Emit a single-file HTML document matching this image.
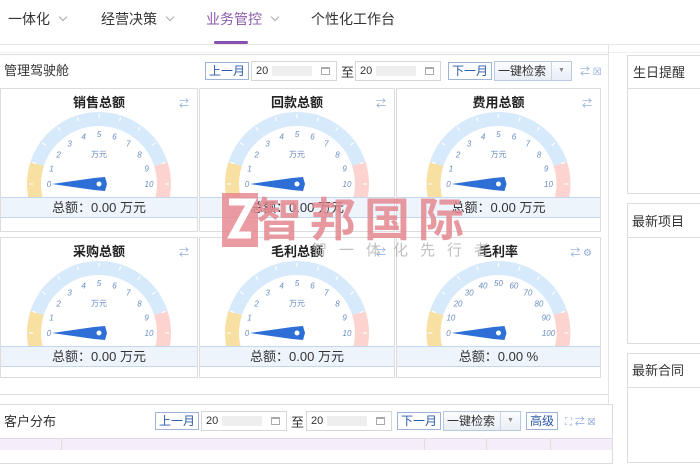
<!DOCTYPE html>
<html><head><meta charset="utf-8">
<style>
*{box-sizing:border-box;margin:0;padding:0}
body{width:700px;height:450px;overflow:hidden;background:#fff;font-family:"Liberation Sans","Noto Sans CJK SC",sans-serif;color:#333;position:relative}
.a{position:absolute}
.nav{font-size:14px;color:#333;top:9px}
.chev{display:inline-block;width:6px;height:6px;border-right:1px solid #aaa;border-bottom:1px solid #aaa;transform:rotate(45deg);margin-left:10px;position:relative;top:-4px}
.box{border:1px solid #dcdcdc;background:#fff}
.btn{position:absolute;height:18px;border:1px solid #9db4d8;font-size:12px;line-height:16px;color:#2a5aa8;padding:0 3px;background:#fff}
.date{position:absolute;height:20px;border:1px solid #d6d6d6;font-size:11px;line-height:18px;padding-left:4px;color:#333;background:#fff}
.date i{position:absolute;left:20px;top:4px;width:40px;height:10px;background:#eee}
.date b{position:absolute;right:6px;top:5px;width:9px;height:8px;border:1px solid #aaa;border-top-width:2px}
.sel{position:absolute;height:20px;border:1px solid #b9c9e2;background:linear-gradient(#fbfcfe,#e9eef6);font-size:12px;line-height:18px;padding-left:3px;color:#333}
.sel span{position:absolute;right:0;top:0;width:20px;height:18px;border-left:1px solid #c9d4e6;font-size:7px;text-align:center;color:#888}
.cell{position:absolute;border:1px solid #dcdcdc;background:#fff;overflow:hidden}
.cell h4{position:absolute;top:3px;left:0;right:0;text-align:center;font-size:13px;font-weight:bold;color:#222}
.foot{position:absolute;left:0;right:0;height:21px;background:#eef4fc;border-top:1px solid #c5d7ee;border-bottom:1px solid #c5d7ee;text-align:center;font-size:13px;line-height:19px;color:#333}
.ref{position:absolute;right:8px;top:6px;color:#8eabd8;font-size:10px}
</style></head><body>
<div class="a nav" style="left:8px">一体化<span class="chev"></span></div>
<div class="a nav" style="left:101px">经营决策<span class="chev"></span></div>
<div class="a nav" style="left:206px;color:#8a5aa8">业务管控<span class="chev"></span></div>
<div class="a nav" style="left:311px">个性化工作台</div>
<div class="a" style="left:214px;top:41px;width:34px;height:3px;background:#8a4fb0;border-radius:2px"></div>
<div class="a" style="left:0;top:44px;width:700px;height:1px;background:#e6e6e6"></div>
<div class="a" style="left:0;top:52px;width:700px;height:1px;background:#eee"></div>

<div class="a box" style="left:-2px;top:54px;width:611px;height:341px"></div>
<div class="a" style="left:4px;top:60px;font-size:13px">管理驾驶舱</div>
<div class="btn" style="left:205px;top:62px">上一月</div>
<div class="date" style="left:251px;top:61px;width:86px">20<i></i><b></b></div>
<div class="a" style="left:341px;top:62px;font-size:13px">至</div>
<div class="date" style="left:355px;top:61px;width:86px">20<i></i><b></b></div>
<div class="btn" style="left:448px;top:62px">下一月</div>
<div class="sel" style="left:494px;top:61px;width:78px">一键检索<span>▼</span></div>
<div class="a" style="left:580px;top:63px;font-size:10px;color:#8eabd8">⇄ ☒</div>

<div id="g"></div>

<div class="a" style="left:608px;top:44px;width:1px;height:406px;background:#e3e3e3"></div>
<div class="a box" style="left:627px;top:55px;width:80px;height:139px"></div>
<div class="a" style="left:627px;top:88px;width:80px;height:1px;background:#ddd"></div>
<div class="a" style="left:633px;top:62px;font-size:13px">生日提醒</div>
<div class="a box" style="left:627px;top:203px;width:80px;height:141px"></div>
<div class="a" style="left:627px;top:237px;width:80px;height:1px;background:#ddd"></div>
<div class="a" style="left:632px;top:211px;font-size:13px">最新项目</div>
<div class="a box" style="left:627px;top:353px;width:80px;height:110px"></div>
<div class="a" style="left:627px;top:387px;width:80px;height:1px;background:#ddd"></div>
<div class="a" style="left:632px;top:360px;font-size:13px">最新合同</div>

<div class="a box" style="left:-2px;top:404px;width:615px;height:60px"></div>
<div class="a" style="left:0;top:438px;width:612px;height:12px;background:#f5eef8;border-top:1px solid #e0d8e6"></div>
<div class="a" style="left:61px;top:438px;width:1px;height:12px;background:#ddd"></div>
<div class="a" style="left:424px;top:438px;width:1px;height:12px;background:#ddd"></div>
<div class="a" style="left:486px;top:438px;width:1px;height:12px;background:#ddd"></div>
<div class="a" style="left:550px;top:438px;width:1px;height:12px;background:#ddd"></div>
<div class="a" style="left:4px;top:411px;font-size:13px">客户分布</div>
<div class="btn" style="left:155px;top:412px">上一月</div>
<div class="date" style="left:201px;top:411px;width:86px">20<i></i><b></b></div>
<div class="a" style="left:291px;top:412px;font-size:13px">至</div>
<div class="date" style="left:306px;top:411px;width:86px">20<i></i><b></b></div>
<div class="btn" style="left:397px;top:412px">下一月</div>
<div class="sel" style="left:443px;top:411px;width:78px">一键检索<span>▼</span></div>
<div class="btn" style="left:526px;top:412px">高级</div>
<div class="a" style="left:565px;top:413px;font-size:10px;color:#8eabd8">⛶ ⇄ ☒</div>

<script>
function gauge(x,y,w,h,title,max,unit,foot,gear){
 var cx=w/2-1, cy=95, ro=72, ri=58, rm=65;
 function P(r,a){a=a*Math.PI/180;return [cx+r*Math.cos(a),cy-r*Math.sin(a)];}
 function arc(a1,a2,col){var p=P(rm,a1),q=P(rm,a2);return '<path d="M'+p[0]+' '+p[1]+' A'+rm+' '+rm+' 0 0 1 '+q[0]+' '+q[1]+'" stroke="'+col+'" stroke-width="14" fill="none"/>';}
 var s=arc(205,162,'#f8dfa2')+arc(162,18,'#d7eafb')+arc(18,-25,'#fdd3cf');
 for(var i=0;i<=10;i++){var a=180-i*18;var p=P(ro-2,a),q=P(ro-6,a);s+='<line x1="'+p[0]+'" y1="'+p[1]+'" x2="'+q[0]+'" y2="'+q[1]+'" stroke="#fff" stroke-width="1.2"/>';
  var t=P(50,a);s+='<text x="'+t[0]+'" y="'+(t[1]+3)+'" font-size="8" font-style="italic" fill="#6a8cc0" text-anchor="middle">'+(max==10?i:i*10)+'</text>';}
 if(unit)s+='<text x="'+cx+'" y="'+(cy-27)+'" font-size="8" fill="#6a8cc0" text-anchor="middle">'+unit+'</text>';
 s+='<path d="M'+(cx-47)+' '+cy+' L'+(cx-5)+' '+(cy-6)+' L'+(cx+6)+' '+(cy-7)+' L'+(cx+8)+' '+cy+' L'+(cx+6)+' '+(cy+7)+' L'+(cx-5)+' '+(cy+6)+'Z" fill="#2d6fd6"/><circle cx="'+cx+'" cy="'+cy+'" r="2.5" fill="#fff"/>';
 return '<div class="cell" style="left:'+x+'px;top:'+y+'px;width:'+w+'px;height:'+h+'px"><svg style="position:absolute;left:0;top:0" width="'+w+'" height="'+h+'">'+s+'</svg><h4>'+title+'</h4><div class="ref">⇄'+(gear?' ⚙':'')+'</div><div class="foot" style="top:108px">'+foot+'</div></div>';
}
var H='';
H+=gauge(0,88,198,144,'销售总额',10,'万元','总额：0.00 万元');
H+=gauge(199,88,196,144,'回款总额',10,'万元','总额：0.00 万元');
H+=gauge(396,88,205,144,'费用总额',10,'万元','总额：0.00 万元');
H+=gauge(0,237,198,141,'采购总额',10,'万元','总额：0.00 万元');
H+=gauge(199,237,196,141,'毛利总额',10,'万元','总额：0.00 万元');
H+=gauge(396,237,205,141,'毛利率',100,'','总额：0.00 %',1);
document.getElementById('g').innerHTML=H;
</script>

<!-- watermark -->
<svg class="a" style="left:222px;top:193px" width="36" height="54" viewBox="0 0 36 54"><path d="M0 0H36V54H0Z" fill="#e88a92" opacity=".85"/><path d="M7 9H29L11 42H29" stroke="#fff" stroke-width="7" fill="none"/></svg>
<div class="a" style="left:256px;top:184px;font-size:46px;font-weight:bold;color:#e58890;opacity:.85;letter-spacing:8px;white-space:nowrap">智邦国际</div>
<div class="a" style="left:312px;top:239px;font-size:15px;color:#b0b0b0;letter-spacing:12px;opacity:.8;white-space:nowrap">智一体化先行者</div>
</body></html>
